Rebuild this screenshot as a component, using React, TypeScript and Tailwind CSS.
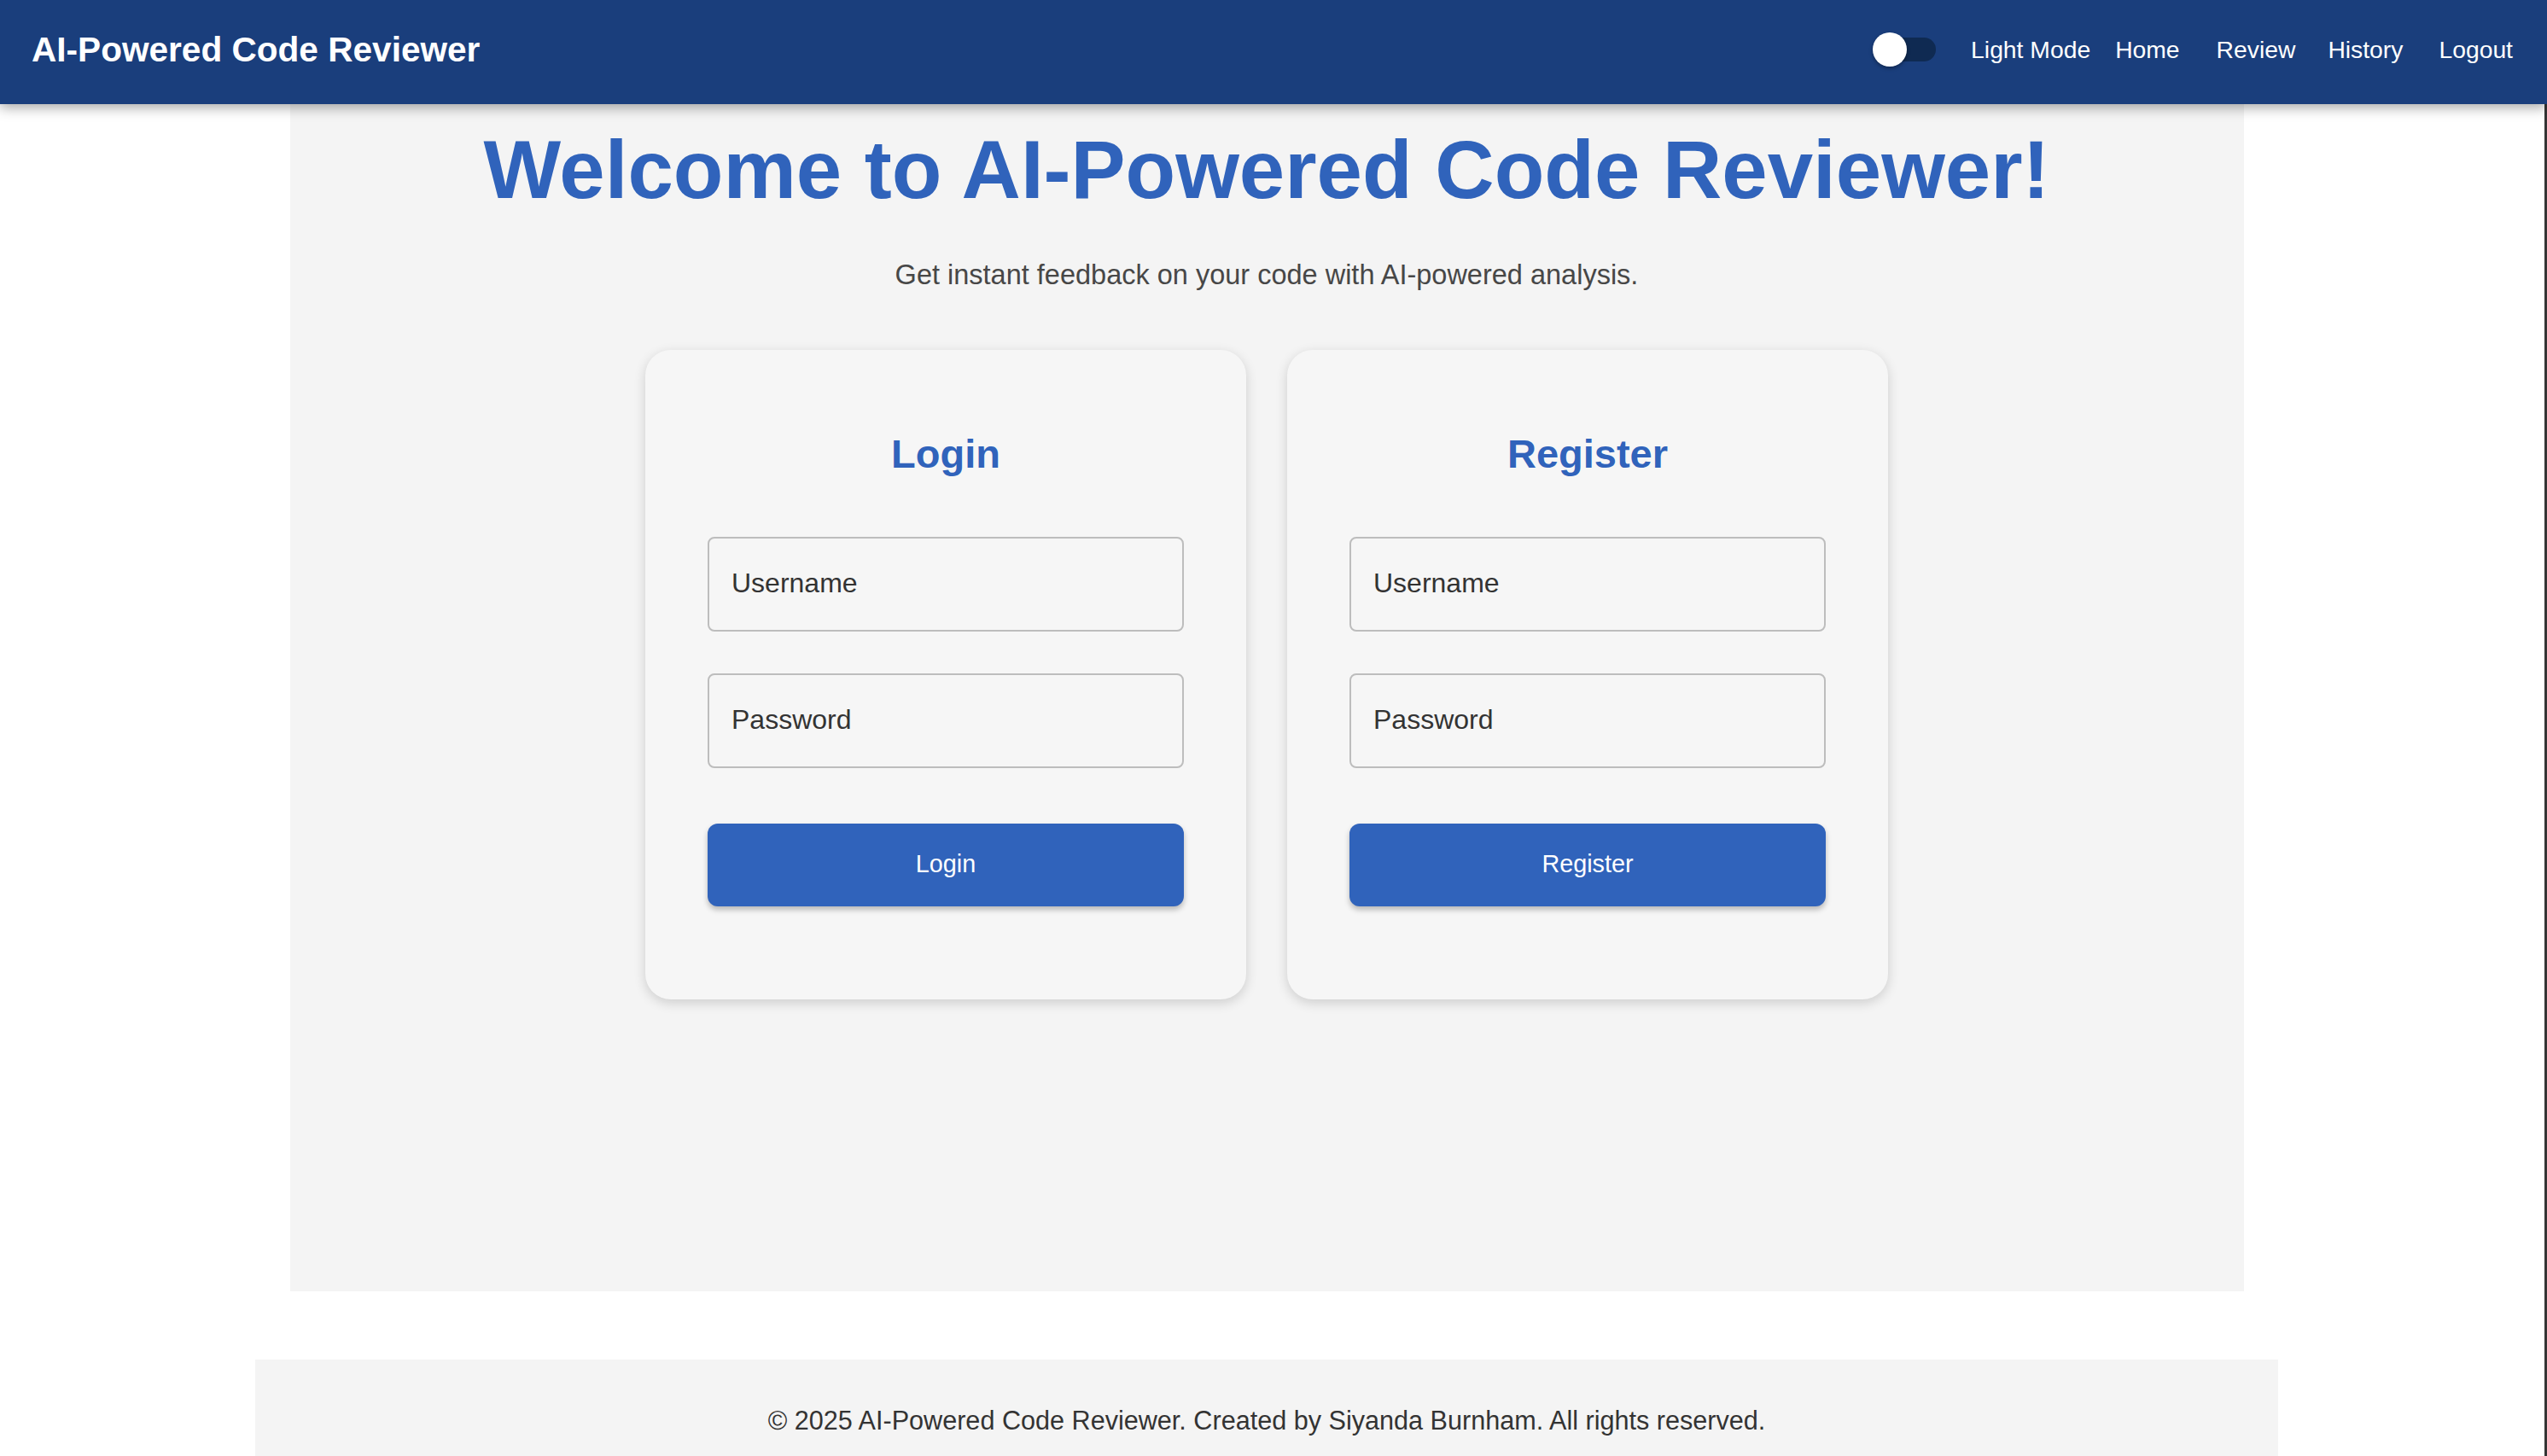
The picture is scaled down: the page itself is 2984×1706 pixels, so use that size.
import React from "react";

function Toggle() {
  return (
    <div className="relative w-[74px] h-[40px]">
      <div className="absolute left-[6px] top-[6px] w-[68px] h-[28px] rounded-full bg-[#0f2a52]" />
      <div className="absolute left-0 top-0 w-[40px] h-[40px] rounded-full bg-white shadow-[0_2px_4px_rgba(0,0,0,0.35)]" />
    </div>
  );
}

function Card({ title, button }: { title: string; button: string }) {
  return (
    <div className="w-[704px] h-[761px] rounded-[30px] bg-[#f6f6f6] shadow-[0_4px_14px_rgba(0,0,0,0.16)] flex flex-col items-center pt-[98px]">
      <h2 className="text-[47px] leading-none font-bold text-[#3063bb]">{title}</h2>
      <input
        className="mt-[74px] w-[558px] h-[111px] border-2 border-[#bdbdbd] rounded-[8px] bg-transparent pl-[26px] pb-[2px] text-[32px] text-[#333] placeholder:text-[#333] outline-none"
        placeholder="Username"
      />
      <input
        className="mt-[49px] w-[558px] h-[111px] border-2 border-[#bdbdbd] rounded-[8px] bg-transparent pl-[26px] pb-[2px] text-[32px] text-[#333] placeholder:text-[#333] outline-none"
        placeholder="Password"
        type="password"
      />
      <button className="mt-[65px] w-[558px] h-[97px] rounded-[12px] bg-[#3063bb] text-white text-[28.8px] shadow-[0_4px_6px_rgba(0,0,0,0.25)]">
        {button}
      </button>
    </div>
  );
}

export default function App() {
  return (
    <div className="h-[1706px] overflow-hidden bg-white font-['Liberation_Sans',Helvetica,Arial,sans-serif]">
      <nav className="relative z-10 h-[122px] bg-[#1a3e7c] flex items-center justify-between pl-[37px] pr-[40px] pb-[6px] shadow-[0_4px_14px_rgba(0,0,0,0.35)]">
        <div className="text-[40.6px] leading-none font-bold text-white">AI-Powered Code Reviewer</div>
        <div className="flex items-center text-[28.3px] leading-none text-white">
          <Toggle />
          <span className="ml-[41px]">Light Mode</span>
          <span className="ml-[29px]">Home</span>
          <span className="ml-[43px]">Review</span>
          <span className="ml-[38px]">History</span>
          <span className="ml-[42px]">Logout</span>
        </div>
      </nav>
      <div className="border-r-[3px] border-[#353535] h-[1584px]">
        <div className="w-[2968px]">
          <main className="mx-auto w-[2289px] h-[1391px] bg-[#f4f4f4] flex flex-col items-center">
            <h1 className="mt-[29px] text-[96px] leading-none font-bold text-[#3063bb]">
              Welcome to AI-Powered Code Reviewer!
            </h1>
            <p className="mt-[59px] text-[32.5px] leading-none text-[#474747]">
              Get instant feedback on your code with AI-powered analysis.
            </p>
            <div className="mt-[71px] flex gap-[48px]">
              <Card title="Login" button="Login" />
              <Card title="Register" button="Register" />
            </div>
          </main>
          <footer className="mt-[80px] mx-auto w-[2370px] h-[160px] bg-[#f4f4f4] flex justify-center pt-[56px]">
            <p className="text-[30.6px] leading-none text-[#333]">
              © 2025 AI-Powered Code Reviewer. Created by Siyanda Burnham. All rights reserved.
            </p>
          </footer>
        </div>
      </div>
    </div>
  );
}
